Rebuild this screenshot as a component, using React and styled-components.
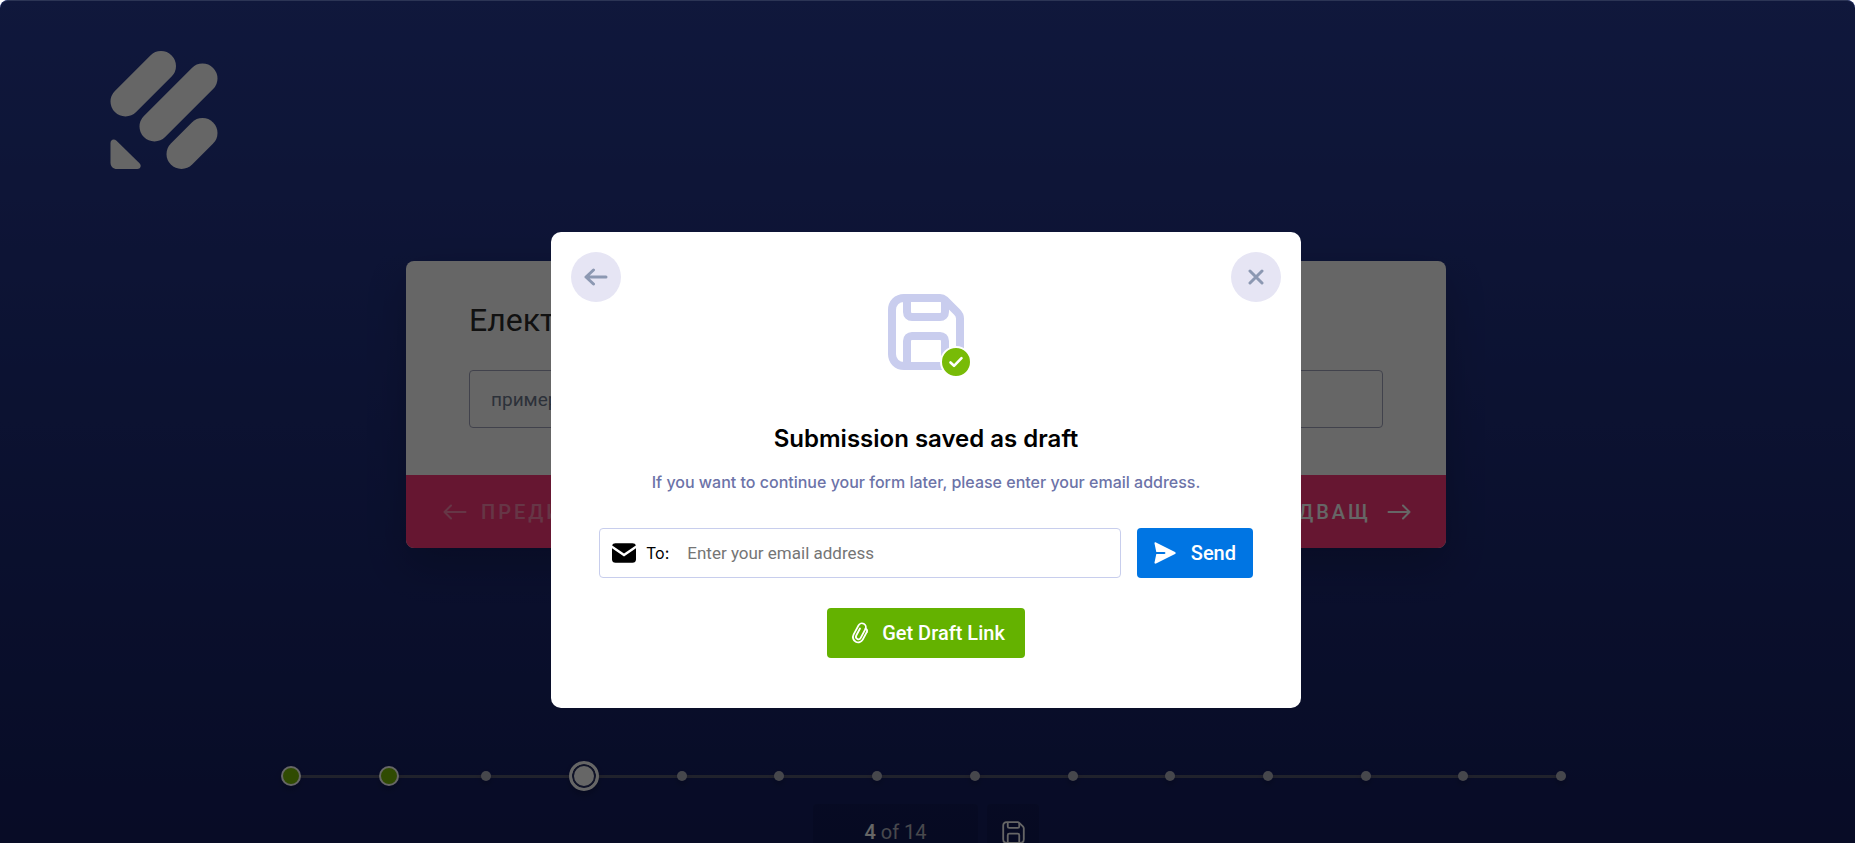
import styled, { createGlobalStyle } from 'styled-components'

const STEPS = 14
const CURRENT = 4
const DONE = [1, 2]

const App = () => {
    return (
        <>
            <GlobalStyle />
            <Page>
                <Header>
                    <LogoIcon />
                </Header>

                <Main>
                    <Card>
                        <Question>
                            <QuestionLabel htmlFor='question'>Електронна поща</QuestionLabel>
                            <QuestionInput id='question' type='email' placeholder='пример@example.com' />
                        </Question>
                        <CardFooter>
                            <NavButton type='button' $faded>
                                <ArrowIcon /> Предишен
                            </NavButton>
                            <NavButton type='button'>
                                Следващ <ArrowIcon $flip />
                            </NavButton>
                        </CardFooter>
                    </Card>

                    <Steps>
                        {Array.from({ length: STEPS }, (_, i) => i + 1).map((step) => (
                            <Step key={step}>
                                <Dot $done={DONE.includes(step)} $current={step === CURRENT} />
                            </Step>
                        ))}
                    </Steps>

                    <Status>
                        <Counter><strong>{CURRENT}</strong>&nbsp;of {STEPS}</Counter>
                        <SaveButton type='button' aria-label='Save'>
                            <SaveIcon size={23} stroke={6} />
                        </SaveButton>
                    </Status>
                </Main>

                <Overlay>
                    <Modal role='dialog' aria-labelledby='draft-title'>
                        <ModalTop>
                            <RoundButton type='button' aria-label='Back'>
                                <BackIcon />
                            </RoundButton>
                            <RoundButton type='button' aria-label='Close'>
                                <CloseIcon />
                            </RoundButton>
                        </ModalTop>

                        <ModalBody>
                            <SavedPicture>
                                <SaveIcon size={76} stroke={8} />
                                <Badge>
                                    <CheckIcon />
                                </Badge>
                            </SavedPicture>
                            <Title id='draft-title'>Submission saved as draft</Title>
                            <Text>If you want to continue your form later, please enter your email address.</Text>

                            <SendForm>
                                <EmailField>
                                    <MailIcon />
                                    <EmailLabel htmlFor='email'>To:</EmailLabel>
                                    <EmailInput id='email' type='email' placeholder='Enter your email address' />
                                </EmailField>
                                <ActionButton type='button' $color='#0075e3'>
                                    <SendIcon /> Send
                                </ActionButton>
                            </SendForm>

                            <ActionButton type='button' $color='#64b200' $wide>
                                <ClipIcon /> Get Draft Link
                            </ActionButton>
                        </ModalBody>
                    </Modal>
                </Overlay>
            </Page>
        </>
    )
}

export default App

/* icons */

const LogoIcon = () => (
    <svg width='108' height='120' viewBox='0 0 108 120' fill='none' stroke='#fff' strokeWidth='30' strokeLinecap='round'>
        <path d='M15.5 51.5 51 16' />
        <path d='M44.5 76.5 92.5 28.5' />
        <path d='M71.5 104 92.5 83' />
        <path d='M.5 93c0-3.500 3.500-4.500 6-2.200l23 22.500c2.300 2.300 1 5.700-2.200 5.700H7c-4 0-6.500-2.500-6.500-6.500z' fill='#fff' stroke='none' />
    </svg>
)

const ArrowIcon = ({ $flip }) => (
    <svg width='24' height='16' viewBox='0 0 24 16' fill='none' stroke='currentColor' strokeWidth='2' strokeLinecap='round' strokeLinejoin='round'>
        {$flip ? <path d='M1.500 8h21M16 1.500 22.500 8 16 14.500' /> : <path d='M22.500 8h-21M8 1.500 1.500 8 8 14.500' />}
    </svg>
)

const BackIcon = () => (
    <svg width='24' height='18' viewBox='0 0 24 18' fill='none' stroke='currentColor' strokeWidth='3' strokeLinecap='round' strokeLinejoin='round'>
        <path d='M22 9H2M9.500 2 2 9l7.500 7' />
    </svg>
)

const CloseIcon = () => (
    <svg width='16' height='16' viewBox='0 0 16 16' fill='none' stroke='currentColor' strokeWidth='3' strokeLinecap='round'>
        <path d='M2 2l12 12M14 2 2 14' />
    </svg>
)

const SaveIcon = ({ size, stroke }) => (
    <svg width={size} height={size} viewBox='0 0 76 76' fill='none' stroke='currentColor' strokeWidth={stroke} strokeLinejoin='round'>
        <path d='M16 4h36c2 0 3.500.7 5 2l12 12c2 2 3 4 3 6.500V60c0 7-5 12-12 12H16C9 72 4 67 4 60V16C4 9 9 4 16 4z' />
        <path d='M19 5v13c0 3 2 5 5 5h28c3 0 5-2 5-5V7' />
        <path d='M19 71V47c0-3 2-5 5-5h28c3 0 5 2 5 5v24' />
    </svg>
)

const CheckIcon = () => (
    <svg width='16' height='12' viewBox='0 0 16 12' fill='none' stroke='#fff' strokeWidth='2.600' strokeLinecap='round' strokeLinejoin='round'>
        <path d='M2.500 6.500 6 9.800 13.500 2.200' />
    </svg>
)

const MailIcon = () => (
    <svg width='24' height='20' viewBox='0 0 24 20'>
        <path d='M.2 2.600C.5 1 1.800.2 3.500.2h17c1.700 0 3 .8 3.300 2.400L12 10.600z' />
        <path d='M0 5.300l12 8.100 12-8.100v11.200c0 2-1.400 3.300-3.500 3.300h-17C1.400 19.800 0 18.500 0 16.500z' />
    </svg>
)

const SendIcon = () => (
    <svg width='22' height='22' viewBox='0 0 22 22' fill='currentColor'>
        <path d='M.5 1.500C.3.500 1.200.1 2 .5l19 9.400c.9.500.9 1.700 0 2.200L2 21.500c-.8.400-1.700 0-1.500-1L2.300 12h8c1.500 0 1.500-2 0-2h-8z' />
    </svg>
)

const ClipIcon = () => (
    <svg width='18' height='22' viewBox='0 0 18 22' fill='none' stroke='currentColor' strokeWidth='1.800' strokeLinecap='round'>
        <g transform='rotate(28 9 11)'>
            <path d='M14.500 7v8.500a5.200 5.200 0 0 1-10.400 0V5a3.900 3.900 0 0 1 7.800 0v10a2.500 2.500 0 0 1-5 0V7' />
            <path d='M11.900 4.500C13.500 4.500 14.500 5.500 14.500 7' />
        </g>
    </svg>
)

/* page */

const GlobalStyle = createGlobalStyle`
    * {
        box-sizing: border-box;
    }

    body {
        margin: 0;
        background: #fff;
        font-family: Roboto, sans-serif;
    }

    button, input {
        font-family: inherit;
    }
`

const Page = styled.div`
    position: relative;
    height: 100vh;
    padding-right: 3px;
    overflow: hidden;
    border-radius: 8px 8px 0 0;
    background: linear-gradient(180deg, #283c96 0%, #141e5f 100%);
`

const Header = styled.header`
    padding: 50px 110px 0;

    svg {
        display: block;
    }
`

const Main = styled.main`
    display: flex;
    flex-direction: column;
    align-items: center;
    padding-top: 91px;
`

const Card = styled.section`
    width: 100%;
    max-width: 1040px;
    border-radius: 8px;
    overflow: hidden;
    background: #fff;
    box-shadow: 0 16px 40px rgba(0, 0, 0, 0.2);
`

const Question = styled.div`
    display: flex;
    flex-direction: column;
    gap: 30px;
    padding: 39px 63px 47px;
`

const QuestionLabel = styled.label`
    font-size: 32px;
    line-height: 40px;
    color: #2c2c2c;
`

const QuestionInput = styled.input`
    height: 58px;
    padding: 0 21px;
    border: 1px solid #a2a6bd;
    border-radius: 4px;
    background: transparent;
    font-size: 19px;

    &::placeholder {
        color: #6f7a90;
    }
`

const CardFooter = styled.div`
    display: flex;
    justify-content: space-between;
    height: 73px;
    padding: 0 35px 0 37px;
    background: #ff397a;
`

const NavButton = styled.button`
    display: flex;
    align-items: center;
    gap: ${({ $faded }) => ($faded ? '14px' : '16px')};
    padding: 0;
    border: none;
    background: none;
    color: #fff;
    opacity: ${({ $faded }) => ($faded ? 0.4 : 1)};
    font-size: 20px;
    font-weight: 500;
    letter-spacing: 3px;
    text-transform: uppercase;
`

const Steps = styled.ol`
    display: flex;
    justify-content: space-between;
    width: 100%;
    max-width: 1290px;
    margin: 213px 0 13px;
    padding: 0;
    list-style: none;
    background: linear-gradient(#52556f, #52556f) center / calc(100% - 20px) 3px no-repeat;
`

const Step = styled.li`
    display: flex;
    align-items: center;
    justify-content: center;
    width: 20px;
    height: 30px;
`

const Dot = styled.span`
    flex: none;
    width: ${({ $done, $current }) => ($current ? '30px' : $done ? '20px' : '10px')};
    height: ${({ $done, $current }) => ($current ? '30px' : $done ? '20px' : '10px')};
    border: ${({ $done, $current }) => ($current ? '3px solid #fff' : $done ? '2px solid #fff' : 'none')};
    border-radius: 50%;
    background: ${({ $done, $current }) => ($current ? '#fff' : $done ? '#78bb07' : '#b0b2bf')};
    box-shadow: ${({ $current }) => ($current ? 'inset 0 0 0 2px #283064, ' : '')}0 4px 6px rgba(0, 0, 0, 0.2);
`

const Status = styled.div`
    display: flex;
    gap: 9px;
`

const Counter = styled.div`
    display: flex;
    align-items: center;
    justify-content: center;
    width: 165px;
    height: 56px;
    border-radius: 4px;
    background: rgba(0, 0, 0, 0.1);
    color: #b4b5c0;
    font-size: 20px;

    strong {
        font-weight: 500;
        color: #fff;
    }
`

const SaveButton = styled.button`
    display: flex;
    align-items: center;
    justify-content: center;
    width: 52px;
    height: 56px;
    padding: 0;
    border: none;
    border-radius: 4px;
    background: rgba(0, 0, 0, 0.1);
    color: #fff;
`

/* modal */

const Overlay = styled.div`
    position: absolute;
    inset: 0;
    display: flex;
    align-items: flex-start;
    justify-content: center;
    padding: 231px 3px 0 0;
    border-top: 1px solid #2c3555;
    border-radius: 8px 8px 0 0;
    background: rgba(0, 0, 0, 0.6);
`

const Modal = styled.div`
    width: 100%;
    max-width: 750px;
    padding-bottom: 50px;
    border-radius: 10px;
    background: #fff;
`

const ModalTop = styled.div`
    display: flex;
    justify-content: space-between;
    height: 62px;
    padding: 20px 20px 0;
`

const RoundButton = styled.button`
    display: flex;
    align-items: center;
    justify-content: center;
    width: 50px;
    height: 50px;
    padding: 0;
    border: none;
    border-radius: 50%;
    background: #e6e5f4;
    color: #8c98b2;
`

const ModalBody = styled.div`
    display: flex;
    flex-direction: column;
    align-items: center;
    padding: 0 48px;
`

const SavedPicture = styled.div`
    position: relative;
    color: #c9cdee;

    svg {
        display: block;
    }
`

const Badge = styled.span`
    position: absolute;
    right: -8px;
    bottom: -8px;
    display: flex;
    align-items: center;
    justify-content: center;
    width: 32px;
    height: 32px;
    border: 2px solid #fff;
    border-radius: 50%;
    background: #78bb07;
`

const Title = styled.h1`
    margin: 54px 0 15px;
    font-family: Inter, sans-serif;
    font-size: 24px;
    font-weight: 600;
    line-height: 30px;
    color: #000;
`

const Text = styled.p`
    margin: 0 0 33px;
    font-family: Inter, sans-serif;
    font-size: 16px;
    font-weight: 500;
    line-height: 26px;
    color: #6c73a8;
`

const SendForm = styled.form`
    display: flex;
    gap: 16px;
    width: 100%;
    margin-bottom: 30px;
`

const EmailField = styled.div`
    display: flex;
    flex: 1;
    align-items: center;
    height: 50px;
    padding: 0 12px;
    border: 1px solid #c8ceed;
    border-radius: 4px;
`

const EmailLabel = styled.label`
    margin: 0 18px 0 10px;
    font-family: Inter, sans-serif;
    font-size: 16px;
    color: #000;
`

const EmailInput = styled.input`
    flex: 1;
    min-width: 0;
    padding: 0;
    border: none;
    outline: none;
    font-size: 17px;

    &::placeholder {
        color: #757575;
    }
`

const ActionButton = styled.button`
    display: flex;
    align-items: center;
    gap: ${({ $wide }) => ($wide ? '13px' : '15px')};
    height: 50px;
    padding: ${({ $wide }) => ($wide ? '0 20px 0 24px' : '0 17px')};
    border: none;
    border-radius: 4px;
    background: ${({ $color }) => $color};
    color: #fff;
    font-size: 20px;
    font-weight: 500;
`
